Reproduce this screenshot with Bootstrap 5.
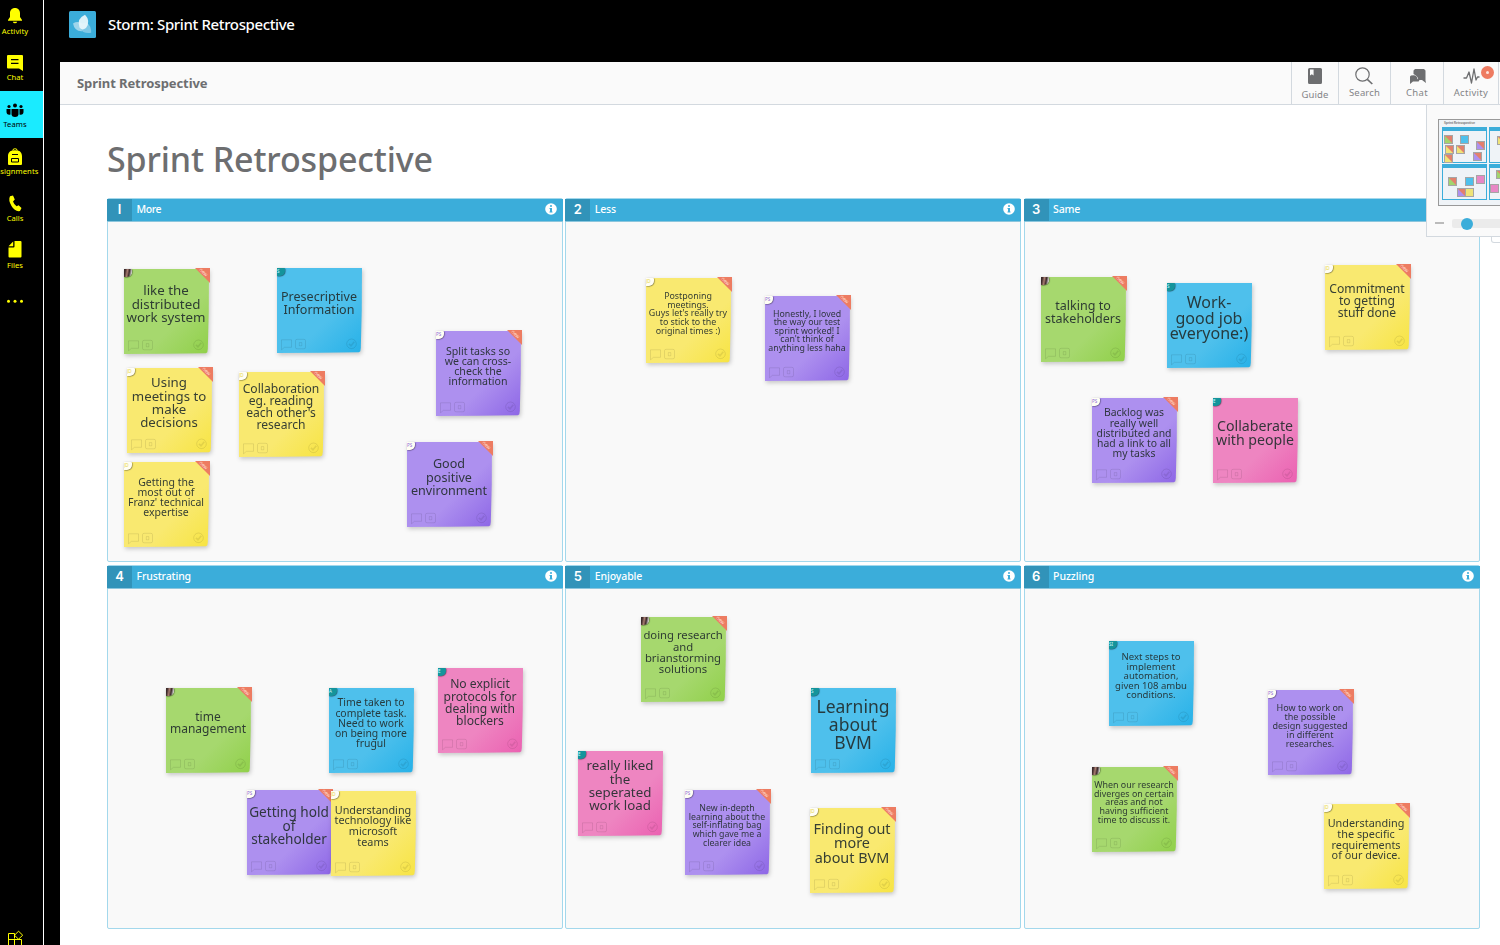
<!DOCTYPE html>
<html lang="en">
<head>
<meta charset="utf-8">
<title>Storm: Sprint Retrospective</title>
<link href="https://cdn.jsdelivr.net/npm/bootstrap@5.3.0/dist/css/bootstrap.min.css" rel="stylesheet">
<style>
body{font-family:"Noto Sans","Open Sans",sans-serif;width:1500px;height:945px;background:#000}
[data-w]{white-space:nowrap}
.rail{width:57px;margin-left:-13px;border-right:1px solid #fff;background:#000;color:#ff0;height:945px}
.rail-item{height:46.9px;padding-top:9px;font-size:7.6px;line-height:10px;font-weight:400}
.rail-item:first-child{margin-top:-3px}
.rail-item svg{width:18px;height:18px;display:block;margin-bottom:1.5px}
.rail-item.on{background:#1aebff;color:#000}
.app-head{height:62px;padding:10.5px 0 0 25px}
.app-logo{width:27px;height:27px}
.app-name{font-size:15px;line-height:27px;margin-left:12px;color:#fff;font-weight:500}
.stage{margin-left:16px;background:#fff;height:883px}
.toolbar{height:43px;background:#fafafa;border-bottom:1px solid #d3d9df}
.toolbar .crumb{font-size:13px;font-weight:700;color:#6d6e70;margin:2px 0 0 17px}
.tool{border-left:1px solid #d3d9df;color:#6d6e70;font-size:9.5px;height:42px;padding-top:4px}
.tool span{color:#838487;line-height:12px;margin-top:1px}
.tool svg{width:20px;height:20px;display:block;margin-left:-1px}
.tool:nth-child(2) span{margin-top:2.5px}
.alert-dot{width:13px;height:13px;left:37px;top:4px;background:#ee7b61;border-radius:50%}
.alert-dot::after{content:"";position:absolute;width:3px;height:3px;border-radius:50%;left:5px;top:5px;background:#ffe4dc}
.board-title{font-size:34px;line-height:40px;font-weight:500;color:#6d6e70;margin:34px 0 0 47px}
.board{display:grid;grid-template-columns:456px 456px 456px;grid-template-rows:364px 364px;gap:3px 2.3px;margin:19px 0 0 47px}
.pane{border:1.5px solid #a3d8ec;background:#f9f9f9;border-radius:2px}
.pane-head{height:23px;margin:-.5px -1px 0;background:#3badda;color:#fff;font-size:10.5px;line-height:21px;border-bottom:1px solid #8cc6dd;font-weight:500}
.pane-num{width:25px;height:22px;background:#3193b9;font-size:13px;font-weight:600;font-family:Inter,sans-serif}
.pane-head svg{width:12px;height:12px;margin-right:6px;margin-top:-1px}
.pane-name{margin-left:4.500px}
.notes{inset:0;pointer-events:none}
.note{width:85px;height:85px}
.paper-wrap{inset:0;filter:drop-shadow(1px 2px 2px rgba(0,0,0,.2))}
.paper{inset:0;clip-path:polygon(0 0,100% 0,99.7% 50%,98.6% 94%,98% 98%,96.5% 99%,50% 99.7%,0 100%)}
.green .paper{background:linear-gradient(135deg,#a6d86e 62%,#90d049)}
.blue .paper{background:linear-gradient(135deg,#4ec0ec 60%,#26b1e8)}
.yellow .paper{background:linear-gradient(135deg,#f9e970 62%,#f7e442)}
.purple .paper{background:linear-gradient(135deg,#ad90ef 60%,#8d66e6)}
.pink .paper{background:linear-gradient(135deg,#ee85c1 60%,#eb60b1)}
.note-text{color:#222d2d;opacity:.9;left:-10.500px;width:105px;white-space:pre;text-align:center}
.note svg{position:absolute}
.face{left:0;top:0;width:7.500px;height:7.500px;font-size:4.5px;line-height:6px;border-radius:0 1px 5px 0;background:#fffef4;overflow:hidden;box-shadow:.5px .5px 1px rgba(0,0,0,.5)}
.blue .face,.pink .face{background:#14949c;color:#d8ffff}
.yellow .face{color:#e6d449}.purple .face{color:#8a68d8}
.green .face{background:linear-gradient(100deg,#3c2a2b 15%,#a87c70 40%,#3c2a2b 62%,#ddd 90%)}
.flag{right:-1px;top:-1px;width:15px;height:15px;background:#ed7c62;clip-path:polygon(0 0,100% 0,100% 100%)}
.flag b{position:absolute;left:4px;top:1px;font-size:5px;line-height:6px;transform:rotate(45deg);color:#ffd9ce;font-weight:400}
.map-box{left:1426px;top:105px;width:80px;height:132px;background:#fafafa;border:1px solid #d3d9df;border-top:0}
.map-box svg{display:block}
.map-tab{left:1491px;top:236px;width:20px;height:7px;background:#fff;border:1px solid #d3d9df;border-top:0;border-radius:0 0 0 3px}
</style>
</head>
<body class="overflow-hidden position-relative m-0">
<div class="d-flex">
  <nav class="rail flex-shrink-0 d-flex flex-column overflow-hidden">
    <div class="rail-item d-flex flex-column align-items-center"><svg viewBox="0 0 18 18" fill="currentColor"><path d="M9 2C5.900 2 4 4.200 4 7v4l-2 3v.8h14V14l-2-3V7c0-2.800-1.900-5-5-5zM6.800 15.700a2.300 2.300 0 0 0 4.400 0z"/></svg><span data-w="26.500">Activity</span></div>
    <div class="rail-item d-flex flex-column align-items-center"><svg viewBox="0 0 18 18" fill="currentColor"><path fill-rule="evenodd" d="M2 2h14a1 1 0 0 1 1 1v15l-4-2.500H2a1 1 0 0 1-1-1V3a1 1 0 0 1 1-1zM5 6v1.200h7.500V6zm0 3.700v1.200h7.500V9.700z"/></svg><span data-w="16.500">Chat</span></div>
    <div class="rail-item on d-flex flex-column align-items-center"><svg viewBox="0 0 18 18" fill="currentColor"><circle cx="9" cy="5.500" r="2"/><circle cx="3" cy="6.500" r="1.600"/><circle cx="15" cy="6.500" r="1.600"/><path d="M5.500 9h7v5.500Q12 17 9 17t-3.500-2.500zM.500 9h4v5.600C2 15.300.500 14 .500 12zM13.500 9h4v3c0 2-1.500 3.300-4 2.600z"/></svg><span data-w="23.500">Teams</span></div>
    <div class="rail-item d-flex flex-column align-items-center"><svg viewBox="0 0 18 18"><path fill="#ff0" d="M2 9.500C2 5.500 4 4 6.500 3.500 6.500.500 11.500.500 11.500 3.500 14 4 16 5.500 16 9.500V17a1 1 0 0 1-1 1H3a1 1 0 0 1-1-1z"/><path d="M7.500 3.200Q9 2 10.500 3.200M6 7.500h6M5.500 11.500h7v3.500h-7z" fill="none" stroke="#000"/></svg><span data-w="47">Assignments</span></div>
    <div class="rail-item d-flex flex-column align-items-center"><svg viewBox="0 0 18 18" fill="currentColor"><path d="M4 2.300 7 1.500 8.800 5.500 7 7.500q1 3 3.600 4.800l2-1L15.500 14l-1.500 3q-5 1-8.500-5Q2 6 4 2.300z"/></svg><span data-w="16.500">Calls</span></div>
    <div class="rail-item d-flex flex-column align-items-center"><svg viewBox="0 0 18 18" fill="currentColor"><path d="M8.500 1H14.500a1 1 0 0 1 1 1v14.500a1 1 0 0 1-1 1h-11a1 1 0 0 1-1-1V7.500h5a1 1 0 0 0 1-1zM7.200 1.500v4.700H2.500z"/></svg><span data-w="16">Files</span></div>
    <div class="rail-item d-flex flex-column align-items-center"><svg viewBox="0 0 18 18" fill="currentColor"><circle cx="2.500" cy="14.200" r="1.500"/><circle cx="9" cy="14.200" r="1.500"/><circle cx="15.500" cy="14.200" r="1.500"/></svg></div>
    <div class="mt-auto d-flex justify-content-center"><svg width="18" height="15" viewBox="0 0 18 15" fill="none" stroke="#ff0"><path d="M8.500 3.500H2.500V15M8.500 3.500v5M2.500 9.500H15.500V15M8.500 9.500V15M12.500 1.200 16.700 5.200 12.500 9.200 8.500 5.200z"/></svg></div>
  </nav>
  <div class="flex-grow-1">
    <header class="app-head d-flex">
      <svg class="app-logo" viewBox="0 0 27 27"><rect width="27" height="27" rx="1.500" fill="#3badda"/><path d="M4 12.500Q9 9.500 14 13q2.500 4-1 7.200Q5.500 20.500 4 12.500z" fill="#9ed5eb"/><path d="M17.500 11.500Q22.500 15 22.200 21.800 14 23 11 17.500 11 12 17.500 11.500z" fill="#86cbe7" opacity=".9"/><path d="M16 3.800Q22 10 17 17q-4 3-6.500-.5Q7 8 16 3.800z" fill="#eaf7fc" opacity=".92"/></svg>
      <div class="app-name"><span data-w="186.500">Storm: Sprint Retrospective</span></div>
    </header>
    <main class="stage">
      <div class="toolbar d-flex align-items-center">
        <div class="crumb me-auto"><span data-w="130.500">Sprint Retrospective</span></div>
        <div class="tool d-flex flex-column align-items-center" style="width:47px"><svg viewBox="0 0 20 20"><path fill="currentColor" fill-rule="evenodd" d="M4.500 2h11a1.500 1.500 0 0 1 1.500 1.500v13a1.500 1.500 0 0 1-1.500 1.500h-11A1.500 1.500 0 0 1 3 16.500v-13A1.500 1.500 0 0 1 4.500 2zM5 3.500v6l1.800-1.300L8.600 9.500v-6z"/></svg><span data-w="27">Guide</span></div>
        <div class="tool d-flex flex-column align-items-center" style="width:52px"><svg viewBox="0 0 20 20" fill="none" stroke="currentColor" stroke-width="1.200"><circle cx="8.500" cy="8.500" r="6.700"/><path d="m13.300 13.300 5 4.700" stroke-width="1.600"/></svg><span data-w="31">Search</span></div>
        <div class="tool d-flex flex-column align-items-center" style="width:53px"><svg viewBox="0 0 20 20" fill="currentColor"><path d="M8 3h9l1.500 1.500V14.500l.5 2.500-4-3H11q1-3-4.500-6V4.500z"/><path d="M4 9.500q6-1.500 6.500 3.500l2 1.500-1 1H6L3 18V10.500z"/></svg><span data-w="22">Chat</span></div>
        <div class="tool d-flex flex-column align-items-center position-relative" style="width:55px"><svg viewBox="0 0 20 20" fill="none" stroke="currentColor" stroke-width="1.300" stroke-linejoin="round"><path d="M2.500 12h3L8 6l2.500 11L13 3l2 11 1.500-3H18.500"/></svg><span data-w="34.500">Activity</span><i class="alert-dot position-absolute"></i></div>
        <div class="tool" style="width:2px"></div>
      </div>
      <h1 class="board-title"><span data-w="326">Sprint Retrospective</span></h1>
      <div class="board" id="board"></div>
    </main>
  </div>
</div>
<div class="notes position-absolute" id="notes"></div>
<div class="map-tab position-absolute"></div>
<div class="map-box position-absolute"><svg width="80" height="131" viewBox="1427 105 80 131" id="map"></svg></div>
<script src="https://cdn.jsdelivr.net/npm/bootstrap@5.3.0/dist/js/bootstrap.bundle.min.js"></script>
<script>
const panes=[['I','More',24.5],['2','Less',21],['3','Same',27],['4','Frustrating',54.5],['5','Enjoyable',47.5],['6','Puzzling',41]];
document.getElementById('board').innerHTML=panes.map(([n,t,w])=>`<section class="pane"><div class="pane-head d-flex align-items-center"><div class="pane-num text-center">${n}</div><div class="pane-name me-auto"><span data-w="${w}">${t}</span></div><svg viewBox="0 0 12 12"><circle cx="6" cy="6" r="5.800" fill="#fff"/><path d="M5 2.200h2v1.600H5zM4.500 4.900H7v3.700h.5v1h-3v-1H5V5.900h-.5z" fill="#3badda"/></svg></div></section>`).join('');

// colour, x, y, width of the widest line, middle of first line, middle of last line, new flag, avatar, text
const notes=[
['green',124,269,79,290.7,318,1,'','like the\ndistributed\nwork system'],
['blue',277,268,76,296.3,309.5,0,'S','Presecriptive\nInformation'],
['yellow',127.5,368,74.5,383,423,1,'JD','Using\nmeetings to\nmake\ndecisions'],
['yellow',239.5,372,76.7,388.5,424.5,1,'JD',"Collaboration\neg. reading\neach other's\nresearch"],
['yellow',124,462,76,482,512,1,'JD',"Getting the\nmost out of\nFranz' technical\nexpertise"],
['purple',436.5,331,66.5,351,381,1,'PS','Split tasks so\nwe can cross-\ncheck the\ninformation'],
['purple',407,442,76,464,490.5,1,'PS','Good\npositive\nenvironment'],
['yellow',646,278,78.5,296,331,1,'JD',"Postponing\nmeetings.\nGuys let's really try\nto stick to the\noriginal times :)"],
['purple',765,296,77.5,313.7,348,1,'PS',"Honestly, I loved\nthe way our test\nsprint worked! I\ncan't think of\nanything less haha"],
['green',1041.5,277,76,305.5,318.5,1,'','talking to\nstakeholders'],
['blue',1167,283,78.5,303,334,0,'S','Work-\ngood job\neveryone:)'],
['yellow',1325.5,265.5,75.5,288.5,312.5,1,'JD','Commitment\nto getting\nstuff done'],
['purple',1092.5,398,75,412.3,453.3,1,'PS','Backlog was\nreally well\ndistributed and\nhad a link to all\nmy tasks'],
['pink',1213.5,398,78,426,440,0,'E','Collaberate\nwith people'],
['green',166,688,76,716.5,728.5,1,'','time\nmanagement'],
['blue',329.5,688,72,702.3,743.3,0,'A','Time taken to\ncomplete task.\nNeed to work\non being more\nfrugul'],
['pink',438.5,668,73,684.5,721.3,0,'E','No explicit\nprotocols for\ndealing with\nblockers'],
['purple',247,790,79.7,812,839,1,'PS','Getting hold\nof\nstakeholder'],
['yellow',331.5,791,77,810,842,0,'JD','Understanding\ntechnology like\nmicrosoft\nteams'],
['green',641.5,617,79.3,635,669,1,'','doing research\nand\nbrianstorming\nsolutions'],
['blue',811,688,73,706,742,0,'S','Learning\nabout\nBVM'],
['pink',578.5,751,67,766,806,0,'E','really liked\nthe\nseperated\nwork load'],
['purple',685,790,76.5,808,843,1,'PS','New in-depth\nlearning about the\nself-inflating bag\nwhich gave me a\nclearer idea'],
['yellow',810.5,808,77,829,858,1,'JD','Finding out\nmore\nabout BVM'],
['blue',1109,641,72,657,695,0,'SI','Next steps to\nimplement\nautomation,\ngiven 108 ambu\nconditions.'],
['purple',1268,690,75,707,743,1,'PS','How to work on\nthe possible\ndesign suggested\nin different\nresearches.'],
['green',1092.5,767,80,785,820,1,'','When our research\ndiverges on certain\nareas and not\nhaving sufficient\ntime to discuss it.'],
['yellow',1324,804,76.7,823.5,855.5,1,'JD','Understanding\nthe specific\nrequirements\nof our device.']];
const pen=document.createElement('canvas').getContext('2d');
pen.font='100px "Noto Sans"';
document.getElementById('notes').innerHTML=notes.map(([c,x,y,w,a,b,flag,who,text])=>{
  const lines=text.split('\n');
  const size=w/Math.max(...lines.map(l=>pen.measureText(l).width))*100;
  const pitch=(b-a)/(lines.length-1);
  return `<div class="note ${c} position-absolute" style="left:${Math.floor(x)}px;top:${Math.floor(y)}px"><div class="paper-wrap position-absolute"><div class="paper position-absolute"></div></div>
<div class="note-text position-absolute" style="font-size:${size.toFixed(2)}px;line-height:${pitch}px;top:${(a-Math.floor(y)-pitch/2+.45-size*.03).toFixed(2)}px">${text}</div>
<svg style="left:0;top:68px" width="85" height="16" viewBox="0 .7 85 16" fill="none" stroke="#000" stroke-opacity=".085"><path d="M4.500 4.500h10v7.500h-7l-3 2.500zM20 4h7q1.500 0 1.500 1.500v6.500q0 1.500-1.500 1.500h-7q-1.500 0-1.500-1.500V5.500Q18.500 4 20 4zM22.300 7.300h2.500v3.200h-2.500z"/><circle cx="74.500" cy="8.500" r="4.800"/><path d="m72 8.500 2 2 3.300-4" stroke-width="1.700"/></svg>
<div class="face position-absolute">${who}</div>${flag?'<div class="flag position-absolute"><b>new</b></div>':''}</div>`}).join('');

// overview map: a reduced copy of the panes and notes
const fill={green:'#a2d46e',blue:'#4ec0ec',yellow:'#efe377',purple:'#ad90ef',pink:'#e888c6'};
let m='<rect x="1438.500" y="119.500" width="80" height="86" fill="#eff3f7" stroke="#999"/><text x="1444" y="124" font-size="3.500" font-weight="700" fill="#888" textLength="31">Sprint Retrospective</text>';
for(const x of[1442.5,1489.5])for(const y of[127.5,164.5])m+=`<rect x="${x}" y="${y}" width="44" height="35" fill="#eff3f7" stroke="#3badda"/><rect x="${x-.5}" y="${y-.5}" width="45" height="4" fill="#3badda"/>`;
for(const[c,x,y,f]of[['green',1444,135,1],['blue',1460,135,0],['purple',1476,141,1],['yellow',1445,145,1],['yellow',1456,145,1],['yellow',1444,154,1],['purple',1473,152,1],['yellow',1497,136,1],['green',1448,177,1],['blue',1465,177,0],['pink',1476,175,0],['purple',1457,188,1],['yellow',1465,188,0],['green',1496,170,1],['pink',1490,184,0]])
 m+=`<rect x="${x+.5}" y="${y+.5}" width="8" height="8" fill="${fill[c]}"/>${f?`<path d="M${x+.5} ${y+.5}h8v8z" fill="#e2806c"/>`:''}<rect x="${x+.5}" y="${y+.5}" width="8" height="8" fill="none" stroke="#a5a5a5"/>`;
m+='<rect x="1435" y="222" width="9" height="2" fill="#bbb"/><rect x="1452" y="219" width="60" height="9" rx="2" fill="#ebebeb"/><circle cx="1467" cy="224" r="6" fill="#3badda"/>';
document.getElementById('map').innerHTML=m;

// spread each label over its own width
document.querySelectorAll('[data-w]').forEach(e=>{const d=+e.dataset.w-e.getBoundingClientRect().width;e.style.letterSpacing=(d/e.textContent.length).toFixed(3)+'px'});
</script>
</body>
</html>
